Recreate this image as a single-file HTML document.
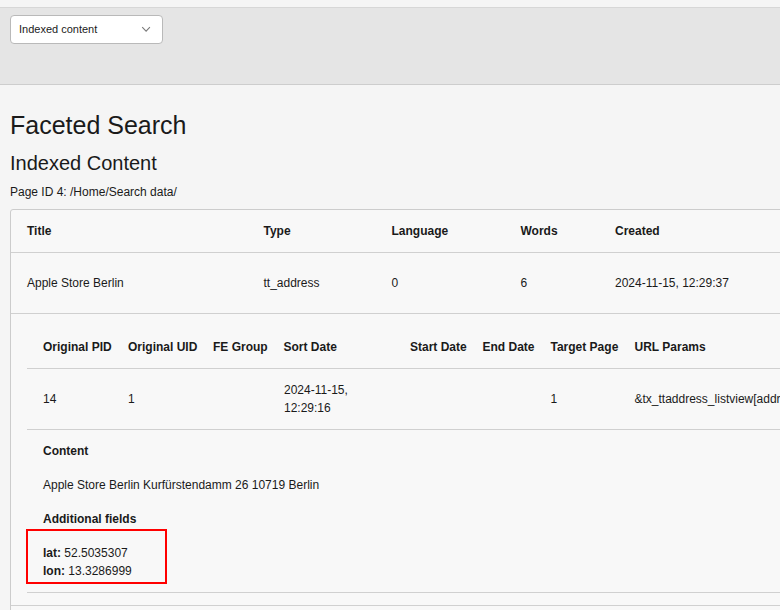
<!DOCTYPE html>
<html><head><meta charset="utf-8">
<style>
*{box-sizing:border-box;margin:0;padding:0}
html,body{width:780px;height:610px;overflow:hidden;background:#f5f5f5;font-family:"Liberation Sans",sans-serif;font-size:12px;color:#1a1a1a}
.abs{position:absolute;white-space:nowrap;line-height:14px}
#topstrip{position:absolute;left:0;top:0;width:780px;height:8px;background:#f5f5f5;border-bottom:1px solid #d7d7d7}
#band{position:absolute;left:0;top:8px;width:780px;height:77px;background:#e5e5e5;border-bottom:1px solid #cdcdcd}
#sel{position:absolute;left:10px;top:15px;width:153px;height:29px;background:#fff;border:1px solid #b9b9b9;border-radius:4px}
#sel span{position:absolute;left:8px;top:6px;font-size:11px;line-height:14px;color:#1a1a1a}
#chev{position:absolute;left:130px;top:10px}
h1{position:absolute;left:10px;top:110px;font-weight:400;font-size:25px;line-height:30px;color:#1a1a1a;white-space:nowrap;transform:scaleY(1.045);transform-origin:0 23.5px}
h2{position:absolute;left:10px;top:151px;font-weight:400;font-size:20px;line-height:24px;color:#1a1a1a;white-space:nowrap}
#card{position:absolute;left:10px;top:209px;width:800px;height:420px;border:1px solid #cccccc;border-radius:3px;background:#f8f8f8}
.hline{position:absolute;height:1px;background:#d0d0d0}
.b{font-weight:700}
#redbox{position:absolute;left:26px;top:528.6px;width:141.3px;height:55.4px;border:2px solid #ff0000}
</style></head><body>
<div id="topstrip"></div>
<div id="band"></div>
<div id="sel"><span>Indexed content</span>
<svg id="chev" width="10" height="8" viewBox="0 0 10 8"><path d="M1.2 1.2 L5.1 5.1 L8.9 1.2" fill="none" stroke="#7a7a7a" stroke-width="1.1"/></svg></div>
<h1>Faceted Search</h1>
<h2>Indexed Content</h2>
<div class="abs" style="left:10px;top:185px">Page ID 4: /Home/Search data/</div>
<div id="card"></div>
<div class="hline" style="left:11px;top:252px;width:769px"></div>
<div class="hline" style="left:11px;top:313px;width:769px"></div>
<div class="hline" style="left:27px;top:368px;width:753px"></div>
<div class="hline" style="left:27px;top:429px;width:753px"></div>
<div class="hline" style="left:27px;top:592px;width:753px"></div>
<div class="hline" style="left:11px;top:605px;width:769px"></div>

<div class="abs b" style="left:27px;top:224px">Title</div>
<div class="abs b" style="left:263.5px;top:224px">Type</div>
<div class="abs b" style="left:391.5px;top:224px">Language</div>
<div class="abs b" style="left:520.5px;top:224px">Words</div>
<div class="abs b" style="left:615px;top:224px">Created</div>

<div class="abs" style="left:27px;top:276px">Apple Store Berlin</div>
<div class="abs" style="left:263.5px;top:276px">tt_address</div>
<div class="abs" style="left:391.5px;top:276px">0</div>
<div class="abs" style="left:520.5px;top:276px">6</div>
<div class="abs" style="left:615px;top:276px">2024-11-15, 12:29:37</div>

<div class="abs b" style="left:43px;top:340px">Original PID</div>
<div class="abs b" style="left:128px;top:340px">Original UID</div>
<div class="abs b" style="left:213px;top:340px">FE Group</div>
<div class="abs b" style="left:283.5px;top:340px">Sort Date</div>
<div class="abs b" style="left:410px;top:340px">Start Date</div>
<div class="abs b" style="left:482.5px;top:340px">End Date</div>
<div class="abs b" style="left:550.5px;top:340px">Target Page</div>
<div class="abs b" style="left:634.5px;top:340px">URL Params</div>

<div class="abs" style="left:43px;top:392px">14</div>
<div class="abs" style="left:128px;top:392px">1</div>
<div class="abs" style="left:284px;top:381px;line-height:18px">2024-11-15,<br>12:29:16</div>
<div class="abs" style="left:550.5px;top:392px">1</div>
<div class="abs" style="left:634.5px;top:392px">&amp;tx_ttaddress_listview[address]=1</div>

<div class="abs b" style="left:43px;top:444px">Content</div>
<div class="abs" style="left:43px;top:478px">Apple Store Berlin Kurfürstendamm 26 10719 Berlin</div>
<div class="abs b" style="left:43px;top:512px">Additional fields</div>
<div id="redbox"></div>
<div class="abs" style="left:43px;top:546px"><b>lat:</b> 52.5035307</div>
<div class="abs" style="left:43px;top:564px"><b>lon:</b> 13.3286999</div>
</body></html>
